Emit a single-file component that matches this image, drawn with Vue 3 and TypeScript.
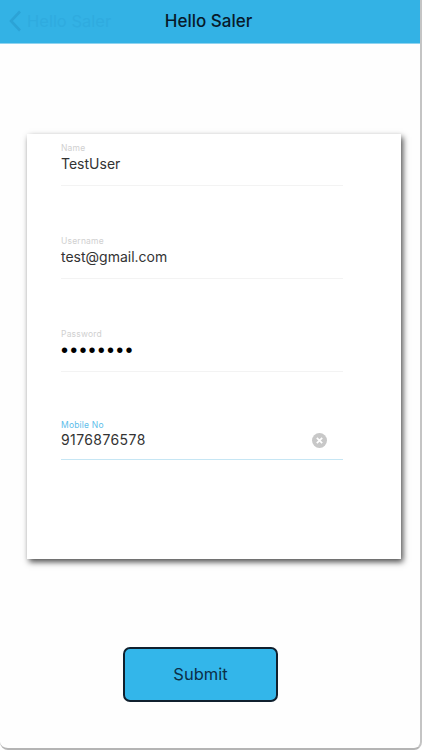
<script setup lang="ts">
interface Field { label: string; value: string; kind?: string }
const fields: Field[] = [
  { label: 'Name', value: 'TestUser' },
  { label: 'Username', value: 'test@gmail.com' },
  { label: 'Password', value: '••••••••', kind: 'password' },
  { label: 'Mobile No', value: '9176876578', kind: 'active' },
]
</script>

<template>
  <div class="screen">
    <header class="bar">
      <div class="back">
        <svg class="chev" width="13" height="22" viewBox="0 0 13 22" aria-hidden="true">
          <path d="M11 1.5 2 11l9 9.5" fill="none" stroke="#2ca3d6" stroke-width="2.6" />
        </svg>
        <span>Hello Saler</span>
      </div>
      <h1>Hello Saler</h1>
    </header>
    <main class="body">
      <section class="card">
        <div v-for="f in fields" :key="f.label" class="field" :class="f.kind">
          <label>{{ f.label }}</label>
          <div class="value">
            <span>{{ f.value }}</span>
            <svg v-if="f.kind === 'active'" class="clear" width="15" height="15" viewBox="0 0 15 15" aria-hidden="true">
              <circle cx="7.5" cy="7.5" r="7.5" fill="#c8c8c8" />
              <path d="M4.8 4.8l5.4 5.4M10.2 4.8l-5.4 5.4" stroke="#fff" stroke-width="1.7" />
            </svg>
          </div>
        </div>
      </section>
      <button class="submit" type="button">Submit</button>
    </main>
  </div>
</template>

<style>
html, body { margin: 0; background: #fff; }
</style>

<style scoped>
.screen {
  box-sizing: border-box;
  width: 422px;
  height: 750px;
  display: flex;
  flex-direction: column;
  overflow: hidden;
  background: #fefefe;
  border-right: 2px solid #c4c4c4;
  border-bottom: 2px solid #b4b4b4;
  border-radius: 0 0 8px 8px;
  font-family: Inter, "Liberation Sans", sans-serif;
}
.bar {
  position: relative;
  box-sizing: border-box;
  height: 44px;
  flex: none;
  padding-bottom: 2px;
  background: #33b2e5;
  border-bottom: 1px solid #8fd3ef;
  display: flex;
  align-items: center;
  justify-content: center;
  margin-right: -2px;
}
.bar h1 {
  margin: 0 5px 0 0;
  font-size: 17px;
  font-weight: 500;
  color: #081a2a;
}
.back {
  position: absolute;
  left: 9px;
  top: 10px;
  display: flex;
  align-items: center;
  gap: 5px;
  font-size: 16.5px;
  color: #2fabdf;
}
.chev { flex: none; }
.body {
  flex: 1;
  display: flex;
  flex-direction: column;
  padding: 90px 0 0 27px;
}
.card {
  box-sizing: border-box;
  width: 374px;
  height: 425px;
  padding: 8px 58px 0 34px;
  background: #fff;
  box-shadow: 2px 3px 6px rgba(0, 0, 0, 0.7);
  display: flex;
  flex-direction: column;
}
.field {
  box-sizing: border-box;
  height: 44px;
  margin-bottom: 49px;
  border-bottom: 1px solid #f3f3f3;
}
.field label {
  display: block;
  height: 12px;
  font-size: 8.5px;
  line-height: 12px;
  letter-spacing: 0.2px;
  color: #d0d0d0;
}
.value {
  display: flex;
  align-items: center;
  justify-content: space-between;
  height: 20px;
  font-size: 14px;
  line-height: 20px;
  color: #333;
}
.password {
  height: 44px;
  margin-bottom: 47px;
}
.password .value {
  height: 20px;
  color: #000;
  letter-spacing: 2.2px;
  font-family: "Liberation Sans", sans-serif;
  font-size: 20px;
}
.field.active {
  height: 41px;
  border-bottom-color: #c6e6f4;
}
.active label { color: #5dbdea; }
.active .value {
  margin-top: -1px;
  letter-spacing: 0.4px;
}
.clear { margin-right: 16px; }
.submit {
  box-sizing: border-box;
  align-self: flex-start;
  width: 155px;
  height: 55px;
  margin: 88px 0 0 96px;
  padding-bottom: 3px;
  background: #33b6ea;
  border: 2px solid #10202e;
  border-radius: 7px;
  font-family: inherit;
  font-size: 16.5px;
  color: #0b2f48;
}
</style>
